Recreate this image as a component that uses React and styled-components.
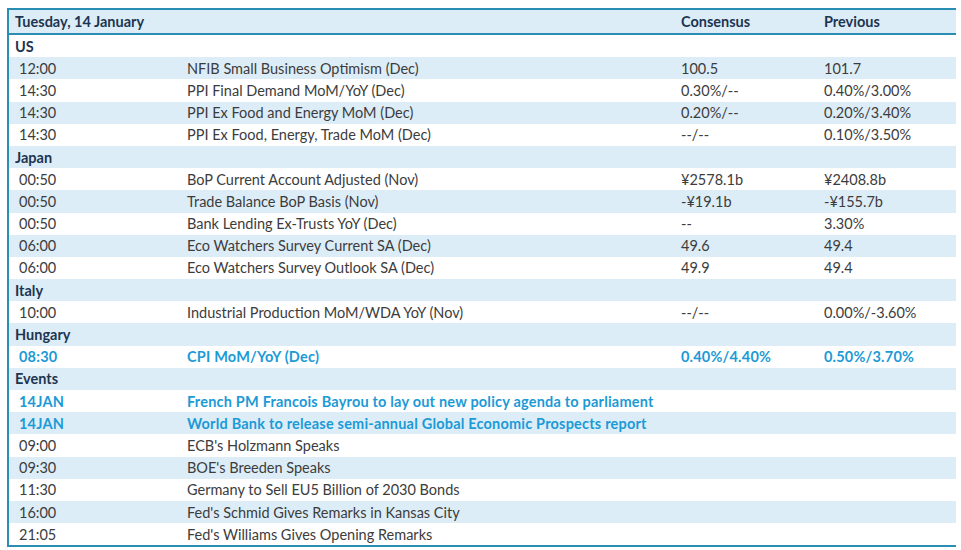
import React from 'react';
import styled, { createGlobalStyle } from 'styled-components';

const GlobalStyle = createGlobalStyle`
  body {
    margin: 0;
    background: #fff;
    font-family: "Lato", "Open Sans", sans-serif;
  }
`;

const Page = styled.div`
  padding: 8px 0 0 7px;
`;

const Table = styled.div`
  width: 949px;
  border-top: 2px solid #2a8db3;
  border-left: 2px solid #2a8db3;
  border-bottom: 2px solid #2a8db3;
  box-sizing: border-box;
`;

const Row = styled.div`
  display: grid;
  grid-template-columns: 178px 494px 143px 1fr;
  align-items: center;
  height: ${p => (p.$head ? '23px' : '22.2px')};
  background: ${p => (p.$shade ? '#dcedf8' : '#ffffff')};
  border-bottom: ${p => (p.$head ? '2px solid #2a8db3' : 'none')};
  font-size: 14.5px;
  color: ${p => (p.$hot ? '#1c9ad6' : '#3c3c3c')};
  font-weight: ${p => (p.$hot ? 700 : 400)};
  letter-spacing: ${p => (p.$hot ? '0.2px' : '0')};
  white-space: nowrap;
`;

const Cell = styled.div`
  padding-left: ${p => p.$pad || 0}px;
`;

const HeadCell = styled.div`
  padding-left: ${p => p.$pad || 0}px;
  font-weight: 700;
  color: #1e3550;
`;

const Section = styled.div`
  grid-column: 1 / -1;
  padding-left: 6px;
  font-weight: 700;
  color: #1e3550;
`;

const rows = [
  { section: 'US' },
  { t: '12:00', d: 'NFIB Small Business Optimism (Dec)', c: '100.5', p: '101.7' },
  { t: '14:30', d: 'PPI Final Demand MoM/YoY (Dec)', c: '0.30%/--', p: '0.40%/3.00%' },
  { t: '14:30', d: 'PPI Ex Food and Energy MoM (Dec)', c: '0.20%/--', p: '0.20%/3.40%' },
  { t: '14:30', d: 'PPI Ex Food, Energy, Trade MoM (Dec)', c: '--/--', p: '0.10%/3.50%' },
  { section: 'Japan' },
  { t: '00:50', d: 'BoP Current Account Adjusted (Nov)', c: '¥2578.1b', p: '¥2408.8b' },
  { t: '00:50', d: 'Trade Balance BoP Basis (Nov)', c: '-¥19.1b', p: '-¥155.7b' },
  { t: '00:50', d: 'Bank Lending Ex-Trusts YoY (Dec)', c: '--', p: '3.30%' },
  { t: '06:00', d: 'Eco Watchers Survey Current SA (Dec)', c: '49.6', p: '49.4' },
  { t: '06:00', d: 'Eco Watchers Survey Outlook SA (Dec)', c: '49.9', p: '49.4' },
  { section: 'Italy' },
  { t: '10:00', d: 'Industrial Production MoM/WDA YoY (Nov)', c: '--/--', p: '0.00%/-3.60%' },
  { section: 'Hungary' },
  { t: '08:30', d: 'CPI MoM/YoY (Dec)', c: '0.40%/4.40%', p: '0.50%/3.70%', hot: true },
  { section: 'Events' },
  { t: '14JAN', d: 'French PM Francois Bayrou to lay out new policy agenda to parliament', hot: true },
  { t: '14JAN', d: 'World Bank to release semi-annual Global Economic Prospects report', hot: true },
  { t: '09:00', d: "ECB's Holzmann Speaks" },
  { t: '09:30', d: "BOE's Breeden Speaks" },
  { t: '11:30', d: 'Germany to Sell EU5 Billion of 2030 Bonds' },
  { t: '16:00', d: "Fed's Schmid Gives Remarks in Kansas City" },
  { t: '21:05', d: "Fed's Williams Gives Opening Remarks" },
];

const App = () => (
  <Page>
    <GlobalStyle />
    <Table>
      <Row $head $shade>
        <HeadCell $pad={6}>Tuesday, 14 January</HeadCell>
        <HeadCell />
        <HeadCell>Consensus</HeadCell>
        <HeadCell>Previous</HeadCell>
      </Row>
      {rows.map((r, i) => (
        <Row key={i} $shade={i % 2 === 1} $hot={r.hot}>
          {r.section ? (
            <Section>{r.section}</Section>
          ) : (
            <>
              <Cell $pad={10}>{r.t}</Cell>
              <Cell>{r.d}</Cell>
              <Cell>{r.c}</Cell>
              <Cell>{r.p}</Cell>
            </>
          )}
        </Row>
      ))}
    </Table>
  </Page>
);

export default App;
